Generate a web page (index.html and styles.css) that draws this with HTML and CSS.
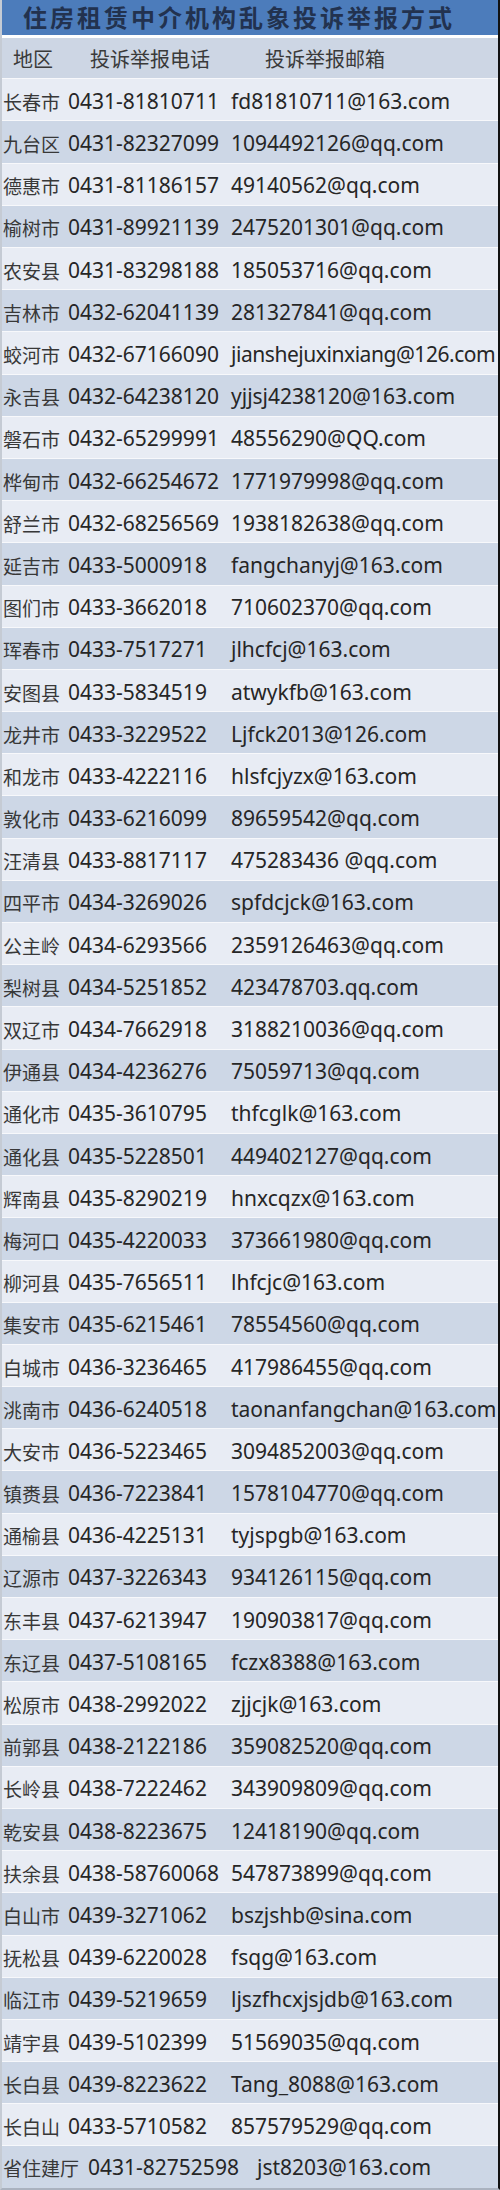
FILE: index.html
```html
<!DOCTYPE html>
<html lang="zh-CN">
<head>
<meta charset="utf-8">
<title>住房租赁中介机构乱象投诉举报方式</title>
<link rel="stylesheet" href="styles.css">
</head>
<body>
<div class="sheet">
  <div class="title">住房租赁中介机构乱象投诉举报方式</div>
  <div class="head"><span>地区</span><span>投诉举报电话</span><span>投诉举报邮箱</span></div>
  <div class="rows">
    <div class="row"><span class="area">长春市</span><span>0431-81810711</span><span>fd81810711@163.com</span></div>
    <div class="row"><span class="area">九台区</span><span>0431-82327099</span><span>1094492126@qq.com</span></div>
    <div class="row"><span class="area">德惠市</span><span>0431-81186157</span><span>49140562@qq.com</span></div>
    <div class="row"><span class="area">榆树市</span><span>0431-89921139</span><span>2475201301@qq.com</span></div>
    <div class="row"><span class="area">农安县</span><span>0431-83298188</span><span>185053716@qq.com</span></div>
    <div class="row"><span class="area">吉林市</span><span>0432-62041139</span><span>281327841@qq.com</span></div>
    <div class="row"><span class="area">蛟河市</span><span>0432-67166090</span><span class="tight">jianshejuxinxiang@126.com</span></div>
    <div class="row"><span class="area">永吉县</span><span>0432-64238120</span><span>yjjsj4238120@163.com</span></div>
    <div class="row"><span class="area">磐石市</span><span>0432-65299991</span><span>48556290@QQ.com</span></div>
    <div class="row"><span class="area">桦甸市</span><span>0432-66254672</span><span>1771979998@qq.com</span></div>
    <div class="row"><span class="area">舒兰市</span><span>0432-68256569</span><span>1938182638@qq.com</span></div>
    <div class="row"><span class="area">延吉市</span><span>0433-5000918</span><span>fangchanyj@163.com</span></div>
    <div class="row"><span class="area">图们市</span><span>0433-3662018</span><span>710602370@qq.com</span></div>
    <div class="row"><span class="area">珲春市</span><span>0433-7517271</span><span>jlhcfcj@163.com</span></div>
    <div class="row"><span class="area">安图县</span><span>0433-5834519</span><span>atwykfb@163.com</span></div>
    <div class="row"><span class="area">龙井市</span><span>0433-3229522</span><span>Ljfck2013@126.com</span></div>
    <div class="row"><span class="area">和龙市</span><span>0433-4222116</span><span>hlsfcjyzx@163.com</span></div>
    <div class="row"><span class="area">敦化市</span><span>0433-6216099</span><span>89659542@qq.com</span></div>
    <div class="row"><span class="area">汪清县</span><span>0433-8817117</span><span>475283436 @qq.com</span></div>
    <div class="row"><span class="area">四平市</span><span>0434-3269026</span><span>spfdcjck@163.com</span></div>
    <div class="row"><span class="area">公主岭</span><span>0434-6293566</span><span>2359126463@qq.com</span></div>
    <div class="row"><span class="area">梨树县</span><span>0434-5251852</span><span>423478703.qq.com</span></div>
    <div class="row"><span class="area">双辽市</span><span>0434-7662918</span><span>3188210036@qq.com</span></div>
    <div class="row"><span class="area">伊通县</span><span>0434-4236276</span><span>75059713@qq.com</span></div>
    <div class="row"><span class="area">通化市</span><span>0435-3610795</span><span>thfcglk@163.com</span></div>
    <div class="row"><span class="area">通化县</span><span>0435-5228501</span><span>449402127@qq.com</span></div>
    <div class="row"><span class="area">辉南县</span><span>0435-8290219</span><span>hnxcqzx@163.com</span></div>
    <div class="row"><span class="area">梅河口</span><span>0435-4220033</span><span>373661980@qq.com</span></div>
    <div class="row"><span class="area">柳河县</span><span>0435-7656511</span><span>lhfcjc@163.com</span></div>
    <div class="row"><span class="area">集安市</span><span>0435-6215461</span><span>78554560@qq.com</span></div>
    <div class="row"><span class="area">白城市</span><span>0436-3236465</span><span>417986455@qq.com</span></div>
    <div class="row"><span class="area">洮南市</span><span>0436-6240518</span><span>taonanfangchan@163.com</span></div>
    <div class="row"><span class="area">大安市</span><span>0436-5223465</span><span>3094852003@qq.com</span></div>
    <div class="row"><span class="area">镇赉县</span><span>0436-7223841</span><span>1578104770@qq.com</span></div>
    <div class="row"><span class="area">通榆县</span><span>0436-4225131</span><span>tyjspgb@163.com</span></div>
    <div class="row"><span class="area">辽源市</span><span>0437-3226343</span><span>934126115@qq.com</span></div>
    <div class="row"><span class="area">东丰县</span><span>0437-6213947</span><span>190903817@qq.com</span></div>
    <div class="row"><span class="area">东辽县</span><span>0437-5108165</span><span>fczx8388@163.com</span></div>
    <div class="row"><span class="area">松原市</span><span>0438-2992022</span><span>zjjcjk@163.com</span></div>
    <div class="row"><span class="area">前郭县</span><span>0438-2122186</span><span>359082520@qq.com</span></div>
    <div class="row"><span class="area">长岭县</span><span>0438-7222462</span><span>343909809@qq.com</span></div>
    <div class="row"><span class="area">乾安县</span><span>0438-8223675</span><span>12418190@qq.com</span></div>
    <div class="row"><span class="area">扶余县</span><span>0438-58760068</span><span>547873899@qq.com</span></div>
    <div class="row"><span class="area">白山市</span><span>0439-3271062</span><span>bszjshb@sina.com</span></div>
    <div class="row"><span class="area">抚松县</span><span>0439-6220028</span><span>fsqg@163.com</span></div>
    <div class="row"><span class="area">临江市</span><span>0439-5219659</span><span>ljszfhcxjsjdb@163.com</span></div>
    <div class="row"><span class="area">靖宇县</span><span>0439-5102399</span><span>51569035@qq.com</span></div>
    <div class="row"><span class="area">长白县</span><span>0439-8223622</span><span>Tang_8088@163.com</span></div>
    <div class="row"><span class="area">长白山</span><span>0433-5710582</span><span>857579529@qq.com</span></div>
    <div class="row last"><span class="area">省住建厅</span><span>0431-82752598</span><span>jst8203@163.com</span></div>
  </div>
</div>
</body>
</html>
```

FILE: styles.css
```css
html, body {
  margin: 0;
  padding: 0;
  background: #ffffff;
}

.sheet {
  width: 500px;
  height: 2190px;
  box-sizing: border-box;
  border-left: 2px solid #c5cbd4;
  border-right: 2px solid #111111;
  border-bottom: 2px solid #aab2bf;
  background: #ffffff;
  overflow: hidden;
  font-family: "Noto Sans", "Noto Sans CJK SC", sans-serif;
  color: #262626;
}

.title {
  height: 34.5px;
  background: #4c7cbb;
  color: #22324f;
  font-family: "Noto Sans CJK SC", sans-serif;
  font-weight: 700;
  font-size: 24px;
  letter-spacing: 3px;
  line-height: 34.5px;
  text-align: center;
  padding-left: 3px;
  padding-right: 25px;
  white-space: nowrap;
}

.head {
  margin-top: 3.8px;
  height: 40px;
  background: #cdd6e4;
  display: grid;
  grid-template-columns: 77px 175px 1fr;
  align-items: center;
  padding-left: 11px;
  font-family: "Noto Sans CJK SC", sans-serif;
  font-size: 20px;
  color: #3a3a3a;
  line-height: 1;
  padding-top: 1px;
  box-sizing: border-box;
}

.rows {
  display: flex;
  flex-direction: column;
}

.row {
  height: 42.2px;
  box-sizing: border-box;
  border-top: 1.4px solid #f7f8fb;
  display: grid;
  grid-template-columns: 65px 163px 1fr;
  align-items: center;
  padding-left: 1px;
  padding-top: 3px;
  font-size: 21px;
  line-height: 1;
  white-space: nowrap;
  background: #e8ecf4;
}

.row:nth-child(even) {
  background: #cdd7e6;
}

.row.last {
  grid-template-columns: 85px 169px 1fr;
  padding-top: 1px;
}

.area {
  font-family: "Noto Sans CJK SC", sans-serif;
  font-size: 19px;
  color: #383838;
}

.tight {
  letter-spacing: -0.45px;
}
```
